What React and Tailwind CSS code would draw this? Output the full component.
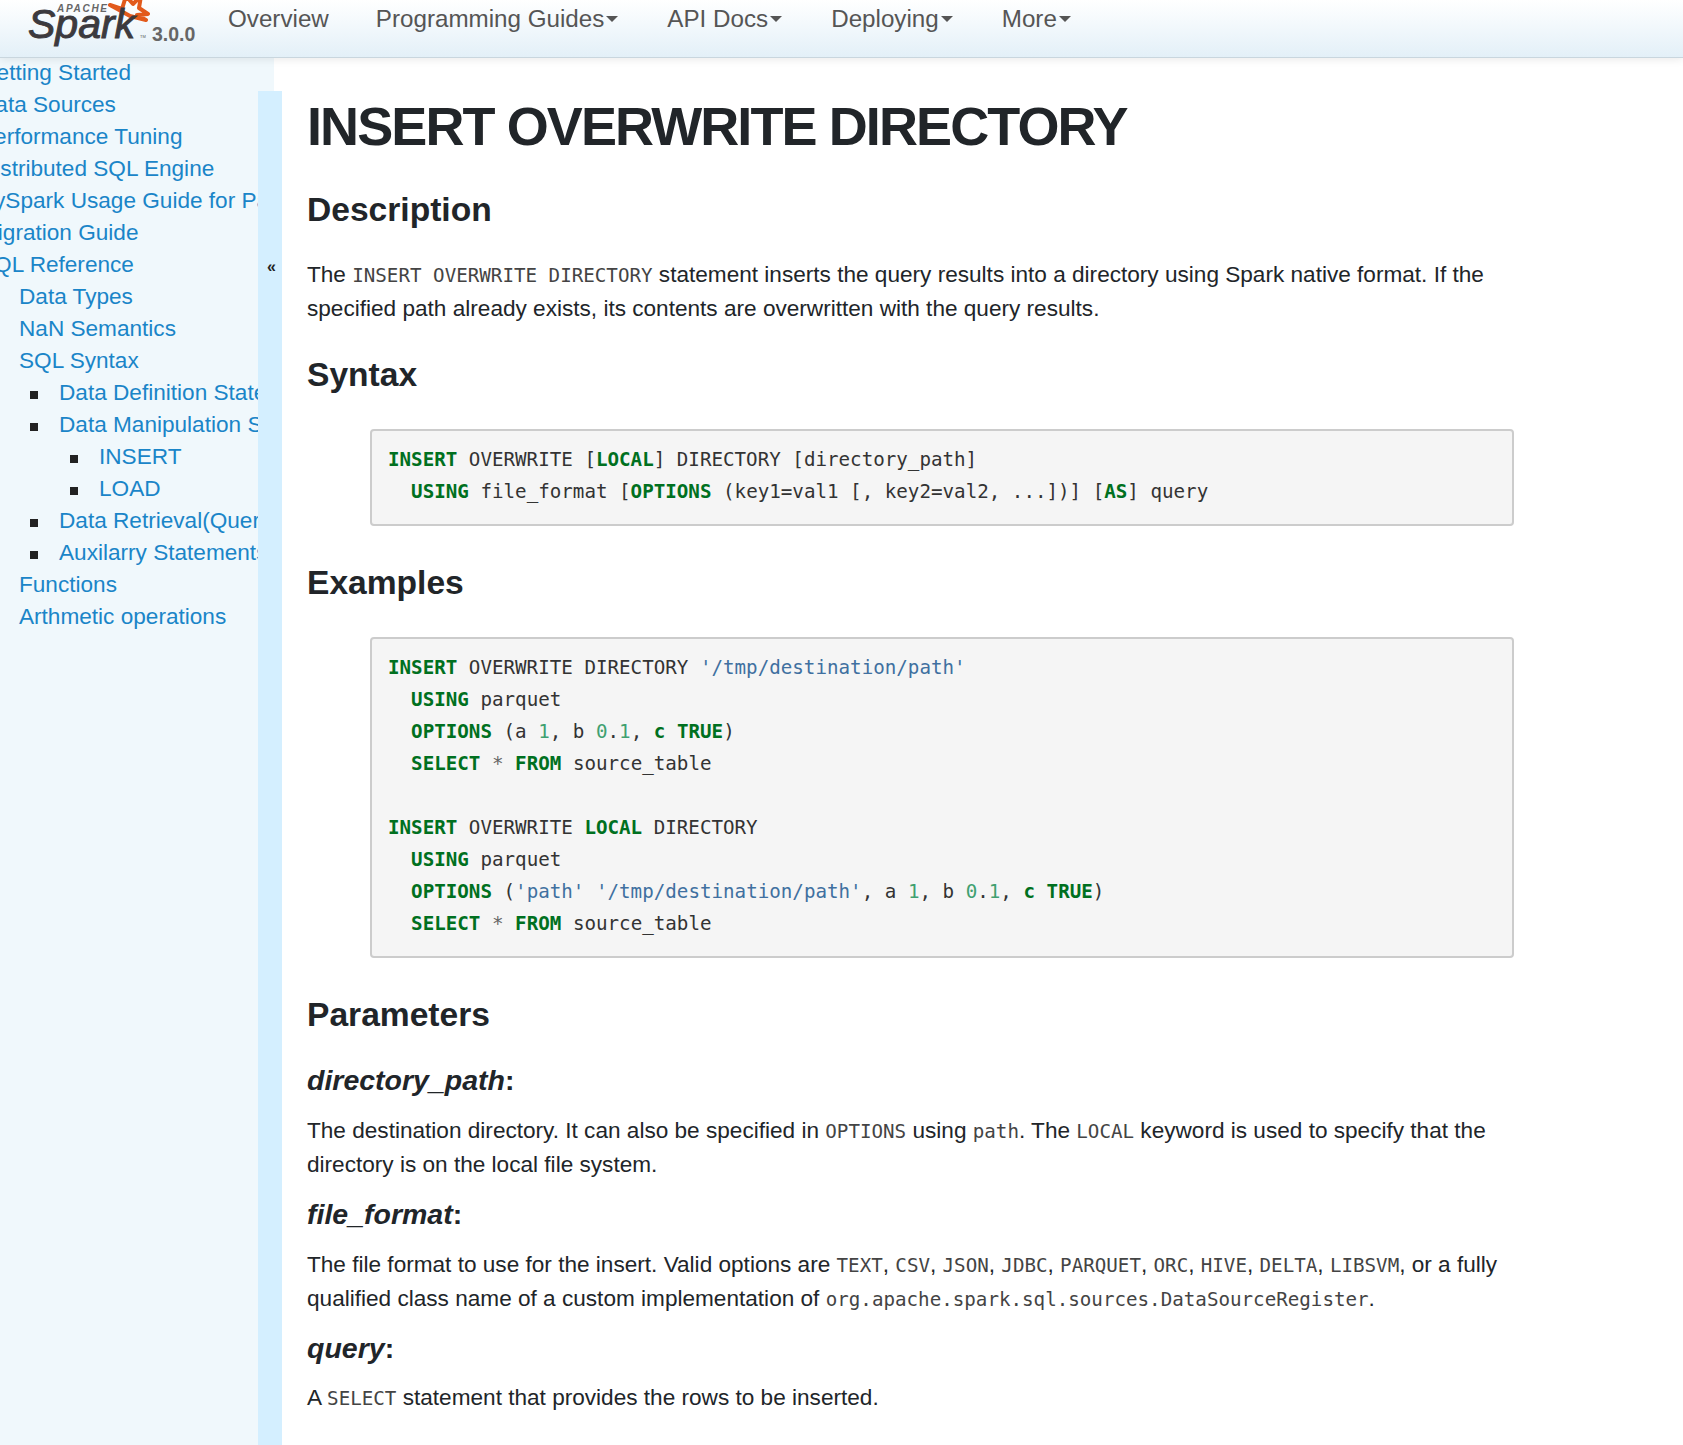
import React from 'react';

const Kw = ({ children }) => <span className="font-bold text-[#007020]">{children}</span>;
const Str = ({ children }) => <span className="text-[#4070a0]">{children}</span>;
const Num = ({ children }) => <span className="text-[#40a070]">{children}</span>;
const Op = ({ children }) => <span className="text-[#666666]">{children}</span>;
const C = ({ children }) => <code className="font-['DejaVu_Sans_Mono',monospace] text-[19.2px] leading-none text-[#444444]">{children}</code>;

const Logo = () => (
    <svg width="200" height="57" viewBox="0 0 200 57" className="shrink-0">
        <path d="M110 5 L122 9 L126 -4 L133 4 L141 -4 L139 8 L148 14 L137 15 L146 20 L130 16 L121 11 Z" fill="none" stroke="#e25a1c" strokeWidth="4" strokeLinejoin="round" />
        <text x="57" y="12" fontFamily="Liberation Sans" fontSize="10" fontStyle="italic" fontWeight="700" letterSpacing="1.7" fill="#666666">APACHE</text>
        <text x="28" y="38" fontFamily="Liberation Sans" fontSize="41" fontStyle="italic" fill="#3c3a3e" stroke="#3c3a3e" strokeWidth="1">Spark</text>
        <text x="140" y="38" fontFamily="Liberation Sans" fontSize="4" fill="#555555">TM</text>
        <text x="152" y="41" fontFamily="Liberation Sans" fontSize="19.5" fontWeight="700" fill="#666666">3.0.0</text>
    </svg>
);

const Caret = () => <span className="ml-[2px] inline-block h-0 w-0 translate-y-[-5px] border-x-[6.5px] border-t-[6.5px] border-x-transparent border-t-[#555555]" />;

const NavBar = () => (
    <nav className="flex h-[58px] shrink-0 items-start overflow-hidden border-b border-[#c9d6de] bg-gradient-to-b from-[#ffffff] to-[#e3f0f8] shadow-[0_2px_8px_rgba(0,0,0,0.08)] relative z-10 font-['Liberation_Sans',sans-serif] text-[24.2px] leading-[38px] text-[#555555]">
        <Logo />
        <a className="ml-[28px]">Overview</a>
        <a className="ml-[47px]">Programming Guides<Caret /></a>
        <a className="ml-[49px]">API Docs<Caret /></a>
        <a className="ml-[49px]">Deploying<Caret /></a>
        <a className="ml-[49px]">More<Caret /></a>
    </nav>
);

const Item = ({ label, children }) => (
    <li>
        <div className="flex items-center">
            <span className="ml-[-29px] mr-[21px] mt-[4px] h-[8px] w-[8px] shrink-0 bg-[#222222]" />
            {label}
        </div>
        {children}
    </li>
);

const Sidebar = () => (
    <aside className="relative w-[274px] shrink-0 overflow-hidden bg-[#f0f8fc] whitespace-nowrap font-['Liberation_Sans',sans-serif] text-[22.6px] leading-[32px] text-[#1a85c8]">
        <div className="ml-[-21px] mt-[-1px]">
            <div>Getting Started</div>
            <div>Data Sources</div>
            <div>Performance Tuning</div>
            <div>Distributed SQL Engine</div>
            <div>PySpark Usage Guide for Pandas</div>
            <div>Migration Guide</div>
            <div>SQL Reference</div>
            <div className="ml-[40px]">
                <div>Data Types</div>
                <div>NaN Semantics</div>
                <div>SQL Syntax</div>
                <ul className="ml-[40px]">
                    <Item label="Data Definition Statements" />
                    <Item label="Data Manipulation Statements">
                        <ul className="ml-[40px]">
                            <Item label="INSERT" />
                            <Item label="LOAD" />
                        </ul>
                    </Item>
                    <Item label="Data Retrieval(Queries)" />
                    <Item label="Auxilarry Statements" />
                </ul>
                <div>Functions</div>
                <div>Arthmetic operations</div>
            </div>
        </div>
    </aside>
);

const Toggle = () => (
    <div className="absolute left-[258px] top-[91px] bottom-0 z-[5] w-[24px] bg-[#d4efff] pl-[3px] text-center font-['Liberation_Sans',sans-serif] text-[16px] font-bold leading-[32px] text-[#222222]">
        <div className="mt-[160px]">«</div>
    </div>
);

const H2 = ({ className, children }) => <h2 className={`text-[33.6px] font-bold leading-[40px] text-[#212529] ${className}`}>{children}</h2>;
const H3 = ({ className, children }) => <h3 className={`text-[28.5px] font-bold leading-[34px] text-[#212529] ${className}`}><em>{children}</em>:</h3>;
const Pre = ({ className, children }) => (
    <pre className={`ml-[63px] w-[1144px] rounded-[4px] border-2 border-[#cccccc] bg-[#f5f5f5] pb-[16px] pl-[16px] pt-[13px] font-['DejaVu_Sans_Mono',monospace] text-[19.2px] leading-[32px] text-[#333333] ${className}`}>{children}</pre>
);

export default function App() {
    return (
        <div className="relative flex h-[1445px] flex-col overflow-hidden bg-white">
            <NavBar />
            <div className="flex flex-1">
                <Sidebar />
                <main className="flex-1 pl-[33px] font-['Liberation_Sans',sans-serif] text-[22.6px] leading-[34px] text-[#212529]">
                    <h1 className="mt-[38px] text-[54px] font-bold leading-[60px] tracking-[-1.9px] text-[#212529]">INSERT OVERWRITE DIRECTORY</h1>
                    <H2 className="mt-[34px]">Description</H2>
                    <p className="mt-[28px]">The <C>INSERT OVERWRITE DIRECTORY</C> statement inserts the query results into a directory using Spark native format. If the<br />specified path already exists, its contents are overwritten with the query results.</p>
                    <H2 className="mt-[29px]">Syntax</H2>
                    <Pre className="mt-[34px]"><Kw>INSERT</Kw> OVERWRITE [<Kw>LOCAL</Kw>] DIRECTORY [directory_path]{'\n'}  <Kw>USING</Kw> file_format [<Kw>OPTIONS</Kw> (key1=val1 [, key2=val2, ...])] [<Kw>AS</Kw>] query</Pre>
                    <H2 className="mt-[37px]">Examples</H2>
                    <Pre className="mt-[34px]"><Kw>INSERT</Kw> OVERWRITE DIRECTORY <Str>'/tmp/destination/path'</Str>{'\n'}  <Kw>USING</Kw> parquet{'\n'}  <Kw>OPTIONS</Kw> (a <Num>1</Num>, b <Num>0</Num>.<Num>1</Num>, <Kw>c</Kw> <Kw>TRUE</Kw>){'\n'}  <Kw>SELECT</Kw> <Op>*</Op> <Kw>FROM</Kw> source_table{'\n'}{'\n'}<Kw>INSERT</Kw> OVERWRITE <Kw>LOCAL</Kw> DIRECTORY{'\n'}  <Kw>USING</Kw> parquet{'\n'}  <Kw>OPTIONS</Kw> (<Str>'path'</Str> <Str>'/tmp/destination/path'</Str>, a <Num>1</Num>, b <Num>0</Num>.<Num>1</Num>, <Kw>c</Kw> <Kw>TRUE</Kw>){'\n'}  <Kw>SELECT</Kw> <Op>*</Op> <Kw>FROM</Kw> source_table</Pre>
                    <H2 className="mt-[37px]">Parameters</H2>
                    <H3 className="mt-[28px]">directory_path</H3>
                    <p className="mt-[17px]">The destination directory. It can also be specified in <C>OPTIONS</C> using <C>path</C>. The <C>LOCAL</C> keyword is used to specify that the<br />directory is on the local file system.</p>
                    <H3 className="mt-[15px]">file_format</H3>
                    <p className="mt-[17px]">The file format to use for the insert. Valid options are <C>TEXT</C>, <C>CSV</C>, <C>JSON</C>, <C>JDBC</C>, <C>PARQUET</C>, <C>ORC</C>, <C>HIVE</C>, <C>DELTA</C>, <C>LIBSVM</C>, or a fully<br />qualified class name of a custom implementation of <C>org.apache.spark.sql.sources.DataSourceRegister</C>.</p>
                    <H3 className="mt-[15px]">query</H3>
                    <p className="mt-[16px]">A <C>SELECT</C> statement that provides the rows to be inserted.</p>
                </main>
            </div>
            <Toggle />
        </div>
    );
}
